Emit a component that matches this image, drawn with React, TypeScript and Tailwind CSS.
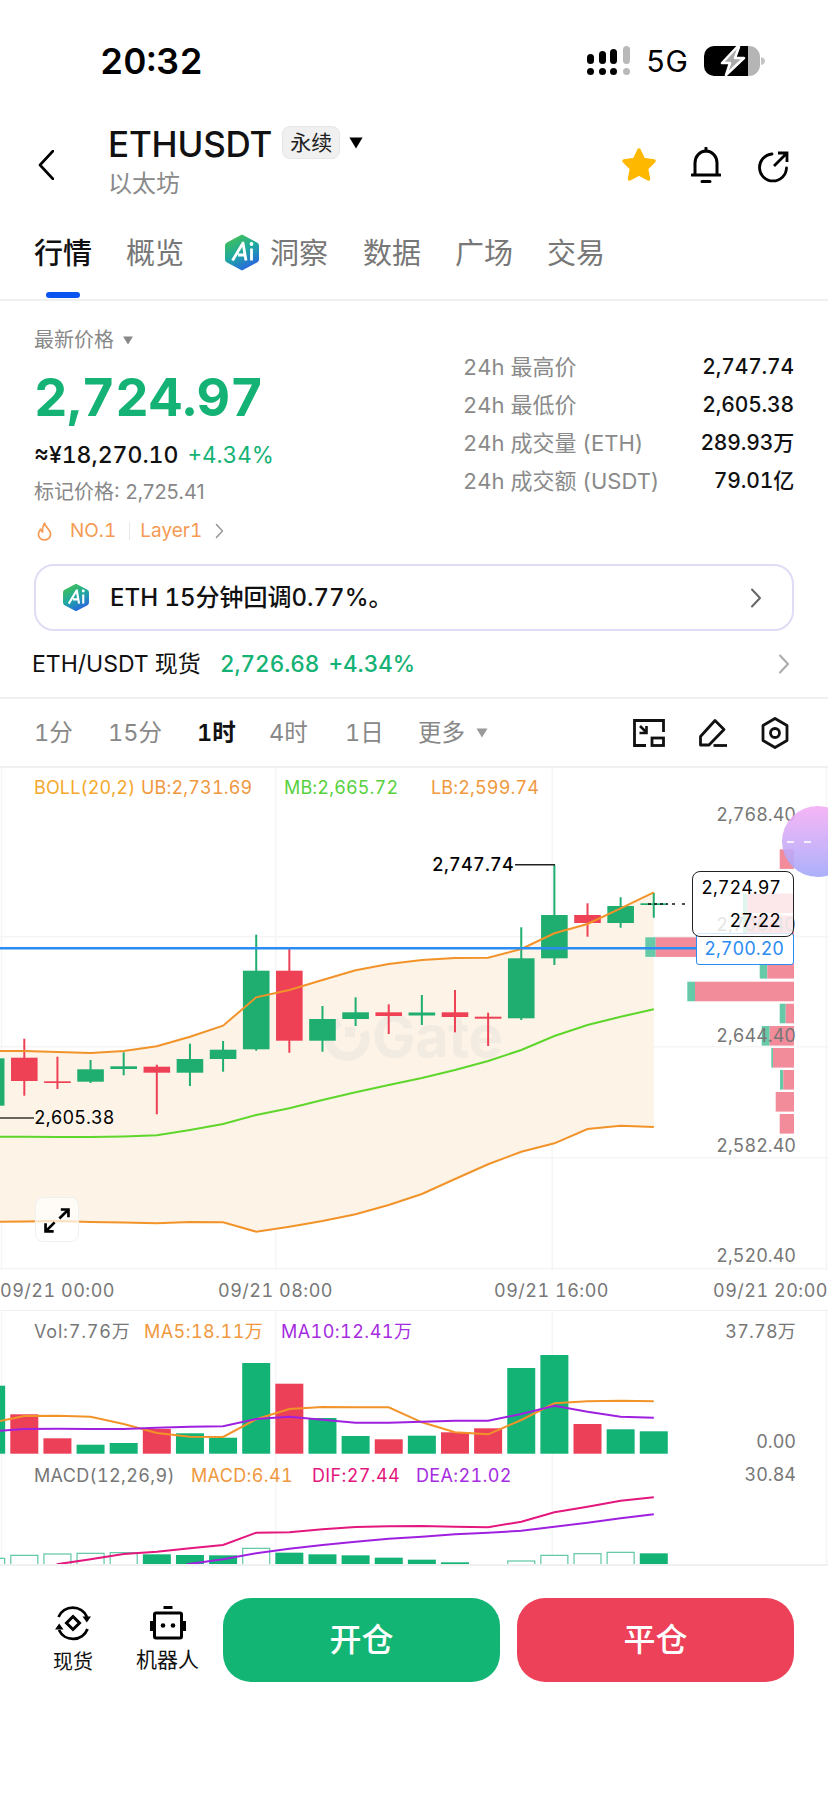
import React from "react";

const cx = (i: number) => 24.3 + 33.13 * i;
const GREEN = "#1fae70";
const RED = "#ee4156";

// i, wickTop, wickBottom, bodyTop, bodyBottom, up
const candles: [number, number, number, number, number, boolean][] = [
  [-1, 1046, 1112, 1058.3, 1105.7, true],
  [0, 1038.7, 1095.7, 1057.7, 1081, false],
  [1, 1056.7, 1089, 1081.3, 1083, false],
  [2, 1060, 1083, 1069.3, 1081.7, true],
  [3, 1052.3, 1075.3, 1066.3, 1069, true],
  [4, 1064.7, 1114.3, 1066.7, 1072.7, false],
  [5, 1043.7, 1086, 1059, 1072.7, true],
  [6, 1041, 1071.7, 1049.7, 1059, true],
  [7, 934.7, 1050.7, 970.7, 1049.3, true],
  [8, 948.3, 1052.7, 970.7, 1040.7, false],
  [9, 1006, 1051.7, 1019, 1040.7, true],
  [10, 997.3, 1026, 1012.3, 1019, true],
  [11, 1004.3, 1034, 1012.3, 1016, false],
  [12, 995, 1025, 1012.5, 1015.5, true],
  [13, 990, 1032.3, 1012.3, 1017, false],
  [14, 1012.7, 1046, 1016.7, 1018.7, false],
  [15, 927.3, 1020, 958.3, 1018.3, true],
  [16, 865, 965, 915, 958.3, true],
  [17, 903.3, 936.7, 915, 923, false],
  [18, 897.3, 927.7, 906, 923, true],
  [19, 892.7, 917.7, 903.3, 905, true],
];

const upper = [1051, 1052, 1053, 1051, 1046.3, 1036.7, 1025.7, 997.3, 990, 980, 970.3, 964, 960, 958, 957.7, 949, 933.3, 924, 908.3, 892.3];
const mid = [1136.8, 1137, 1137, 1136.5, 1135.3, 1130, 1124, 1115, 1108.3, 1100, 1092.3, 1085, 1078, 1070, 1061, 1050, 1036, 1025, 1016.7, 1009.3];
const lower = [1221.5, 1221, 1222, 1222.5, 1223.3, 1222, 1222.3, 1231.7, 1226.7, 1221, 1214.3, 1205, 1194, 1179, 1164.3, 1151.7, 1143.3, 1129, 1125.7, 1127];
const line = (ys: number[], y0: number) =>
  `0,${y0} ` + ys.map((y, i) => `${cx(i).toFixed(1)},${y}`).join(" ");

// y, greenLeft, splitX
const depth: [number, number, number][] = [
  [849.3, 779.7, 779.7],
  [893.5, 743, 747.5],
  [915.5, 743, 747.5],
  [937.3, 645.3, 655.7],
  [959, 759.7, 767.3],
  [981.7, 687.3, 695],
  [1003.7, 779.7, 785.7],
  [1026, 761.7, 769.7],
  [1048, 771.3, 773],
  [1070, 780, 783.3],
  [1092, 775.7, 775.7],
  [1114, 779.7, 779.7],
];

const volumes: [number, number, boolean][] = [
  [-1, 1385.7, true], [0, 1414.3, false], [1, 1438.3, false], [2, 1444.7, true], [3, 1443, true],
  [4, 1429, false], [5, 1433.3, true], [6, 1437.7, true], [7, 1363, true], [8, 1383.7, false],
  [9, 1418, true], [10, 1436, true], [11, 1439.3, false], [12, 1435.7, true], [13, 1432.3, false],
  [14, 1428.3, false], [15, 1368, true], [16, 1355, true], [17, 1424, false], [18, 1429.3, true], [19, 1431.3, true],
];
const ma5 = [1416, 1415.7, 1416.7, 1424, 1433, 1436.7, 1437, 1419.3, 1409, 1407, 1407.3, 1407.3, 1422.3, 1432.3, 1434.3, 1420, 1403.3, 1401.3, 1400.7, 1401.3];
const ma10 = [1429, 1428.7, 1429, 1429, 1427.7, 1426.7, 1426.3, 1419, 1416.7, 1419.7, 1422.7, 1422.7, 1421.7, 1420.7, 1420.7, 1414, 1405.7, 1411.7, 1416.7, 1417.7];

const macd: [number, number, boolean][] = [
  [-1, 865, false], [0, 856, false], [1, 852, false], [2, 850, false], [3, 848, false], [4, 853, true],
  [5, 855, true], [6, 856, true], [7, 835, false], [8, 848, true], [9, 853, true], [10, 856, true],
  [11, 863, true], [12, 869, true], [13, 877, true], [15, 873, false], [16, 856, false], [17, 851, false],
  [18, 847, false], [19, 850, true],
];
const dif = "56.7,1564.3 " + [[2, 1559.3], [3, 1554], [4, 1551.7], [5, 1548.3], [6, 1545], [7, 1532.7], [8, 1532.3], [9, 1529.3], [10, 1527], [11, 1526.3], [12, 1526], [13, 1526.7], [14, 1527.3], [15, 1521.7], [16, 1512.3], [17, 1506.7], [18, 1500.7], [19, 1497.3]].map(([i, y]) => `${cx(i).toFixed(1)},${y}`).join(" ");
const dea = "186.7,1564.3 " + [[6, 1559.3], [7, 1553.3], [8, 1548.7], [9, 1545], [10, 1541.7], [11, 1538.7], [12, 1536.7], [13, 1534.3], [14, 1532.7], [15, 1530.7], [16, 1526.7], [17, 1522.7], [18, 1518.3], [19, 1514.3]].map(([i, y]) => `${cx(i).toFixed(1)},${y}`).join(" ");

function AiLogo({ className, id }: { className: string; id: string }) {
  return (
    <svg viewBox="0 0 36 38" className={className}>
      <defs>
        <linearGradient id={id} x1="0.2" y1="0" x2="0.7" y2="1">
          <stop offset="0" stopColor="#45c24f" />
          <stop offset="0.5" stopColor="#1fa9a0" />
          <stop offset="1" stopColor="#2a5fe6" />
        </linearGradient>
      </defs>
      <path d="M18 1 L33 9 Q35 10 35 12 V26 Q35 28 33 29 L18 37 L3 29 Q1 28 1 26 V12 Q1 10 3 9 Z" fill={`url(#${id})`} />
      <path d="M8.5 27 L19 9.5 L22 27 M14 21.5 H21" fill="none" stroke="#fff" strokeWidth="2.8" strokeLinejoin="round" />
      <path d="M27.5 15 V27" stroke="#fff" strokeWidth="2.8" />
      <circle cx="27.5" cy="10.5" r="1.9" fill="#fff" />
    </svg>
  );
}

function Chevron({ className, stroke }: { className: string; stroke: string }) {
  return (
    <svg viewBox="0 0 12 20" className={className}>
      <path d="M2 1.5 L10 10 L2 18.5" fill="none" stroke={stroke} strokeWidth="2" strokeLinecap="round" strokeLinejoin="round" />
    </svg>
  );
}

function Triangle({ className, fill }: { className: string; fill: string }) {
  return (
    <svg viewBox="0 0 12 10" className={className}>
      <path d="M0.5 0.5 H11.5 L6 9.5 Z" fill={fill} />
    </svg>
  );
}

function StatusBar() {
  return (
    <div className="flex h-[122px] items-center">
      <span className="ml-[100px] w-[487px] text-[36px] font-semibold leading-none text-black">20:32</span>
      <svg viewBox="0 0 46 30" className="h-[30px] w-[46px]">
        <rect x="0" y="8" width="7" height="10" rx="3.5" fill="#000" />
        <rect x="12" y="5" width="7" height="13" rx="3.5" fill="#000" />
        <rect x="23" y="3" width="7" height="15" rx="3.5" fill="#000" />
        <rect x="36" y="0" width="7" height="18" rx="3.5" fill="#b9b9b9" />
        <circle cx="3.5" cy="25.5" r="3.5" fill="#000" />
        <circle cx="15.5" cy="25.5" r="3.5" fill="#000" />
        <circle cx="26.5" cy="25.5" r="3.5" fill="#000" />
        <circle cx="39.5" cy="25.5" r="3.5" fill="#b9b9b9" />
      </svg>
      <span className="ml-[13px] w-[58px] text-[30px] leading-none text-black">5G</span>
      <svg viewBox="0 0 62 30" className="h-[30px] w-[62px]">
        <path d="M10 0 H44 V30 H10 A10 10 0 0 1 0 20 V10 A10 10 0 0 1 10 0 Z" fill="#000" />
        <path d="M44 0 H45 A11 11 0 0 1 56 11 V19 A11 11 0 0 1 45 30 H44 Z" fill="#b5b5b5" />
        <path d="M57 11 Q61 12 61 15 Q61 18 57 19 Z" fill="#c4c4c4" />
        <path d="M33 1 L18 17 H26 L22 29 L40 12 H31 L35 1 Z" fill="#a9a9a9" stroke="#fff" strokeWidth="2.5" strokeLinejoin="round" />
      </svg>
    </div>
  );
}

function Header() {
  return (
    <div className="flex h-[88px]">
      <svg viewBox="0 0 16 30" className="ml-[38px] mt-[28px] h-[30px] w-[16px]">
        <path d="M15 1 L2 15 L15 29" fill="none" stroke="#000" strokeWidth="2.6" strokeLinecap="round" strokeLinejoin="round" />
      </svg>
      <div className="ml-[54px] w-[513px]">
        <div className="flex h-[40px] items-center">
          <span className="mt-[4px] text-[35px] font-medium leading-none tracking-[-0.2px] text-[#111]">ETHUSDT</span>
          <span className="ml-[10px] mt-[1px] flex h-[33px] w-[58px] items-center justify-center rounded-lg border border-[#e6e6e6] bg-[#f0f0f0] text-[21px] leading-none text-[#222]">永续</span>
          <Triangle className="ml-[8px] mt-[1px] h-[12px] w-[16px]" fill="#000" />
        </div>
        <div className="mt-[10px] text-[24px] leading-[24px] text-[#8a8a8a]">以太坊</div>
      </div>
      <svg viewBox="0 0 36 35" className="mt-[25px] h-[35px] w-[36px]">
        <path d="M18 3 L22.5 12.5 L33 14 L25.5 21.5 L27.5 32 L18 27 L8.5 32 L10.5 21.5 L3 14 L13.5 12.5 Z" fill="#ffb800" stroke="#ffb800" strokeWidth="3.5" strokeLinejoin="round" />
      </svg>
      <svg viewBox="0 0 30 36" className="ml-[34px] mt-[25px] h-[36px] w-[30px]">
        <path d="M4 28 V16 A11 12 0 0 1 26 16 V28" fill="none" stroke="#000" strokeWidth="3" />
        <path d="M1 28 H29 M15 1 V4 M11 34.5 H19" fill="none" stroke="#000" strokeWidth="3" strokeLinecap="round" />
      </svg>
      <svg viewBox="0 0 32 32" className="ml-[36px] mt-[29px] h-[32px] w-[32px]">
        <path d="M15 3 A13.5 13.5 0 1 0 29.5 17" fill="none" stroke="#000" strokeWidth="2.8" strokeLinecap="round" />
        <path d="M17 15 L30 2 M21 2 H30 V11" fill="none" stroke="#000" strokeWidth="2.8" />
      </svg>
    </div>
  );
}

function Tabs() {
  return (
    <div className="relative flex h-[91px] items-start border-b-2 border-[#f0f0f0] pl-[34px] pt-[29px] text-[29px] leading-[30px] text-[#777]">
      <span className="font-medium text-[#111]">行情</span>
      <span className="ml-[34px]">概览</span>
      <AiLogo id="aiTab" className="ml-[40px] -mt-[6px] h-[39px] w-[36px]" />
      <span className="ml-[10px]">洞察</span>
      <span className="ml-[35px]">数据</span>
      <span className="ml-[34px]">广场</span>
      <span className="ml-[34px]">交易</span>
      <span className="absolute bottom-[1px] left-[46px] h-[6px] w-[34px] rounded-full bg-[#0a55f0]" />
    </div>
  );
}

function Stat({ label, value }: { label: string; value: string }) {
  return (
    <div className="flex h-[38px] items-center justify-between">
      <span className="text-[22px] text-[#8a8a8a]">{label}</span>
      <span className="text-[21px] font-medium tracking-[-0.15px] text-[#111]">{value}</span>
    </div>
  );
}

function Info() {
  return (
    <div className="flex h-[263px] justify-between pl-[34px] pr-[34px]">
      <div>
        <div className="mt-[25px] flex h-[28px] items-center text-[20px] text-[#888]">
          最新价格
          <Triangle className="ml-[8px] h-[9px] w-[12px]" fill="#888" />
        </div>
        <div className="mt-[14px] h-[60px] text-[52px] font-bold leading-[60px] text-[#14b274]">2,724.97</div>
        <div className="mt-[12px] flex h-[30px] items-center">
          <span className="text-[23px] font-medium text-[#111]">≈¥18,270.10</span>
          <span className="ml-[9px] text-[22.5px] text-[#14b274]">+4.34%</span>
        </div>
        <div className="mt-[8px] h-[28px] text-[20px] leading-[28px] text-[#888] normal-nums">标记价格: 2,725.41</div>
        <div className="mt-[12px] flex h-[26px] items-center text-[19px] text-[#f59b55]">
          <svg viewBox="0 0 16 20" className="ml-[3px] h-[19px] w-[15px]">
            <path d="M8 1 C8.5 5 14.5 8 14.5 13 A6.5 6 0 0 1 1.5 13 C1.5 10.5 3 8.5 4 7.5 C4.5 9 5 10 6 10.5 C5.5 7 6.5 3.5 8 1 Z" fill="none" stroke="#f59b55" strokeWidth="1.8" strokeLinejoin="round" />
          </svg>
          <span className="ml-[18px]">NO.1</span>
          <span className="ml-[13px] h-[18px] w-px bg-[#e8e8e8]" />
          <span className="ml-[10px]">Layer1</span>
          <Chevron className="ml-[13px] h-[18px] w-[9px]" stroke="#999" />
        </div>
      </div>
      <div className="mt-[47px] w-[331px]">
        <Stat label="24h 最高价" value="2,747.74" />
        <Stat label="24h 最低价" value="2,605.38" />
        <Stat label="24h 成交量 (ETH)" value="289.93万" />
        <Stat label="24h 成交额 (USDT)" value="79.01亿" />
      </div>
    </div>
  );
}

function AiCard() {
  return (
    <div className="mx-[34px] flex h-[67px] items-center rounded-[20px] border-2 border-[#e0dcf5] pl-[26px] pr-[30px]">
      <AiLogo id="aiCard" className="h-[29px] w-[28px]" />
      <span className="ml-[20px] flex-1 text-[24px] font-medium text-[#111]">ETH 15分钟回调0.77%。</span>
      <Chevron className="h-[20px] w-[12px]" stroke="#666" />
    </div>
  );
}

function SpotRow() {
  return (
    <div className="flex h-[68px] items-center border-b-2 border-[#f0f0f0] pl-[32px] pr-[38px] text-[23px]">
      <span className="text-[#111]">ETH/USDT 现货</span>
      <span className="ml-[19px] text-[22.5px] font-medium text-[#14b274]">2,726.68</span>
      <span className="ml-[9px] text-[22.5px] font-medium text-[#14b274]">+4.34%</span>
      <span className="flex-1" />
      <Chevron className="h-[20px] w-[12px]" stroke="#aaa" />
    </div>
  );
}

function Timeframes() {
  return (
    <div className="flex h-[69px] items-center border-b-2 border-[#f0f0f0] pl-[34px] text-[23.5px] text-[#888]">
      <span className="w-[74px]">1分</span>
      <span className="w-[89px]">15分</span>
      <span className="w-[72px] font-semibold text-[#111]">1时</span>
      <span className="w-[76px]">4时</span>
      <span className="w-[73px]">1日</span>
      <span className="w-[58px]">更多</span>
      <Triangle className="h-[10px] w-[12px]" fill="#999" />
      <svg viewBox="0 0 32 28" className="ml-[145px] h-[28px] w-[32px]">
        <path d="M13 26.5 H1.5 V1.5 H30.5 V13" fill="none" stroke="#111" strokeWidth="2.8" />
        <rect x="19" y="19" width="11.5" height="7.5" fill="none" stroke="#111" strokeWidth="2.8" />
        <path d="M7 7 L13 13 M13.5 7 V14 H6.5" fill="none" stroke="#111" strokeWidth="2.6" />
      </svg>
      <svg viewBox="0 0 30 30" className="ml-[33px] h-[30px] w-[30px]">
        <path d="M2.5 27 V18.5 L17 2.5 L26 11.5 L11 27 Z" fill="none" stroke="#111" strokeWidth="2.8" strokeLinejoin="round" />
        <path d="M15.5 27.5 H29" fill="none" stroke="#111" strokeWidth="2.8" />
      </svg>
      <svg viewBox="0 0 28 32" className="ml-[33px] h-[32px] w-[28px]">
        <path d="M14 1.5 L26 8.5 V23.5 L14 30.5 L2 23.5 V8.5 Z" fill="none" stroke="#111" strokeWidth="2.8" strokeLinejoin="round" />
        <circle cx="14" cy="16" r="4.5" fill="none" stroke="#111" strokeWidth="2.8" />
      </svg>
    </div>
  );
}

function MainChart() {
  return (
    <div className="relative h-[502px] text-[18px] leading-[24px]">
      <svg viewBox="0 768 828 502" className="absolute inset-0 h-[502px] w-[828px]">
        <path d="M0 936.7 H828 M0 1046.7 H828 M0 1157.7 H828 M1.5 768 V1270 M275.7 768 V1270 M552.3 768 V1270 M826.5 768 V1270 M0 1268.5 H828" stroke="#f5f5f5" strokeWidth="1.5" fill="none" />
        <polygon
          fill="#fdf3e7"
          points={
            line(upper, 1051) +
            " " +
            lower.map((y, i) => `${cx(i).toFixed(1)},${y}`).reverse().join(" ") +
            " 0,1221.7"
          }
        />
      </svg>
      <span className="absolute left-[372px] top-[236px] text-[58px] font-bold leading-[64px] tracking-[-0.5px] text-[#f2ebe2]">Gate</span>
      <svg viewBox="0 768 828 502" className="absolute inset-0 h-[502px] w-[828px]">
        <path d="M340 1022 A18 18 0 1 0 364 1032" fill="none" stroke="#f2ebe2" strokeWidth="9" />
        <rect x="345" y="1027" width="10" height="10" fill="#f2ebe2" />
        {candles.map(([i, wt, wb, bt, bb, up]) => (
          <g key={i} fill={up ? GREEN : RED} stroke="none">
            <rect x={cx(i) - 1} y={wt} width="2" height={wb - wt} />
            <rect x={cx(i) - 13.3} y={bt} width="26.6" height={Math.max(bb - bt, 1.6)} />
          </g>
        ))}
        <polyline points={line(upper, 1051)} fill="none" stroke="#f2932a" strokeWidth="2" />
        <polyline points={line(mid, 1136.8)} fill="none" stroke="#5ed62c" strokeWidth="2" />
        <polyline points={line(lower, 1221.7)} fill="none" stroke="#f2932a" strokeWidth="2" />
        <path d="M515 864.7 H555" stroke="#222" strokeWidth="1.5" />
        <path d="M0 1118 H34" stroke="#333" strokeWidth="1.5" />
        <path d="M648 904 H668 M672 904 H675 M682 904 H685" stroke="#111" strokeWidth="1.5" strokeDasharray="3 3" />
        {depth.map(([y, gl, rl]) => (
          <g key={y}>
            {rl > gl && <rect x={gl} y={y} width={rl - gl} height="19.6" fill="#66caa8" />}
            <rect x={rl} y={y} width={794 - rl} height="19.6" fill="#f28b9a" />
          </g>
        ))}
        <path d="M0 948.3 H700" stroke="#2b8cf2" strokeWidth="2.4" />
      </svg>
      <div className="relative flex h-[40px] items-center pl-[34px] text-[18px] tracking-[0.15px]">
        <span className="w-[107px] whitespace-nowrap text-[#f5a82d]">BOLL(20,2)</span>
        <span className="w-[143px] whitespace-nowrap text-[#f0983e]">UB:2,731.69</span>
        <span className="w-[147px] whitespace-nowrap text-[#57d13d]">MB:2,665.72</span>
        <span className="whitespace-nowrap text-[#f0983e]">LB:2,599.74</span>
      </div>
      <span className="absolute right-[32px] top-[35px] text-[#777]">2,768.40</span>
      <span className="absolute right-[32px] top-[145px] text-[#777]">2,706.40</span>
      <span className="absolute right-[32px] top-[256px] text-[#777]">2,644.40</span>
      <span className="absolute right-[32px] top-[366px] text-[#777]">2,582.40</span>
      <span className="absolute right-[32px] top-[476px] text-[#777]">2,520.40</span>
      <span className="absolute left-[432px] top-[85px] font-medium tracking-[0.3px] text-black">2,747.74</span>
      <span className="absolute left-[34px] top-[338px] tracking-[0.1px] text-black">2,605.38</span>
      <div className="absolute left-[696px] top-[165px] flex h-[32px] w-[98px] items-center justify-end rounded-[3px] border border-[#2b8cf2] bg-white pr-[9px] text-[#2b8cf2]">2,700.20</div>
      <div className="absolute left-[692px] top-[103px] flex h-[66px] w-[102px] flex-col items-end justify-center rounded-lg border border-[#222] bg-white/80 pr-[12px] leading-[33px] text-black">
        <span>2,724.97</span>
        <span>27:22</span>
      </div>
      <div className="absolute left-[35px] top-[429px] flex h-[45px] w-[44px] items-center justify-center rounded-lg border border-[#f0f0f0] bg-white/70">
        <svg viewBox="0 0 44 44" className="h-[44px] w-[44px]">
          <path d="M24.5 20.5 L33.5 11.5 M26 11 H34 V19 M19.5 24.5 L10.5 33.5 M10 25.5 V34 H18.5" fill="none" stroke="#000" strokeWidth="2.8" />
        </svg>
      </div>
      <div className="absolute left-[782px] top-[38px] flex h-[71px] w-[71px] items-center rounded-full bg-gradient-to-b from-[#f5aef6] to-[#a3a8fa] pl-[5px] opacity-90">
        <span className="h-[2px] w-[7px] bg-white/80" />
        <span className="ml-[10px] h-[2px] w-[7px] bg-white/80" />
      </div>
    </div>
  );
}

function XAxis() {
  return (
    <div className="flex h-[41px] items-center border-b border-[#f0f0f0] text-[18px] tracking-[0.5px] text-[#777]">
      <span className="w-[218px] whitespace-nowrap">09/21 00:00</span>
      <span className="w-[276px] whitespace-nowrap">09/21 08:00</span>
      <span className="w-[219px] whitespace-nowrap">09/21 16:00</span>
      <span className="w-[115px] whitespace-nowrap">09/21 20:00</span>
    </div>
  );
}

function VolumeChart() {
  return (
    <div className="relative h-[144px] text-[18px] leading-[24px]">
      <svg viewBox="0 1311 828 144" className="absolute inset-0 h-[144px] w-[828px]">
        <path d="M275.7 1311 V1455 M552.3 1311 V1455 M1.5 1311 V1455 M826.5 1311 V1455" stroke="#f5f5f5" strokeWidth="1.5" />
        {volumes.map(([i, top, up]) => (
          <rect key={i} x={cx(i) - 14} y={top} width="28" height={1453.7 - top} fill={up ? "#12b375" : "#ec4058"} />
        ))}
        <polyline points={line(ma5, 1421)} fill="none" stroke="#f2932a" strokeWidth="2" />
        <polyline points={line(ma10, 1430.7)} fill="none" stroke="#a020e0" strokeWidth="2" />
      </svg>
      <div className="relative flex h-[41px] items-center pl-[34px] tracking-[0.45px]">
        <span className="w-[110px] whitespace-nowrap tracking-[0.8px] text-[#777]">Vol:7.76万</span>
        <span className="w-[137px] whitespace-nowrap text-[#f0983e]">MA5:18.11万</span>
        <span className="whitespace-nowrap text-[#a62ce0]">MA10:12.41万</span>
      </div>
      <span className="absolute right-[32px] top-[9px] tracking-[0.2px] text-[#777]">37.78万</span>
      <span className="absolute right-[32px] top-[119px] text-[#777]">0.00</span>
    </div>
  );
}

function MacdChart() {
  return (
    <div className="relative h-[109px] text-[18px] leading-[24px]">
      <svg viewBox="0 1455 828 109" className="absolute inset-0 h-[109px] w-[828px]">
        <path d="M275.7 1455 V1564 M552.3 1455 V1564 M1.5 1455 V1564 M826.5 1455 V1564" stroke="#f5f5f5" strokeWidth="1.5" />
        {macd.map(([i, z, solid]) => {
          const top = 1270 + z / 3;
          return solid ? (
            <rect key={i} x={cx(i) - 14} y={top} width="28" height={1564 - top} fill="#12b375" />
          ) : (
            <rect key={i} x={cx(i) - 13.5} y={top} width="27" height={1570 - top} fill="#fff" stroke="#5ec7a3" strokeWidth="1.2" />
          );
        })}
        <polyline points={dif} fill="none" stroke="#e3177e" strokeWidth="2" />
        <polyline points={dea} fill="none" stroke="#a020e0" strokeWidth="2" />
      </svg>
      <div className="relative flex h-[41px] items-center pl-[34px] tracking-[0.35px]">
        <span className="w-[157px] whitespace-nowrap text-[#777]">MACD(12,26,9)</span>
        <span className="w-[121px] whitespace-nowrap text-[#f0983e]">MACD:6.41</span>
        <span className="w-[104px] whitespace-nowrap text-[#e3177e]">DIF:27.44</span>
        <span className="whitespace-nowrap text-[#a62ce0]">DEA:21.02</span>
      </div>
      <span className="absolute right-[32px] top-[8px] text-[#777]">30.84</span>
    </div>
  );
}

function BottomBar() {
  return (
    <div className="flex border-t-2 border-[#f0f0f0] pl-[53px] pt-[32px]">
      <div className="flex w-[40px] flex-col items-center">
        <svg viewBox="0 0 36 36" className="mt-[7px] h-[36px] w-[36px]">
          <path d="M3.5 12 A15.5 15.5 0 0 1 32 12" fill="none" stroke="#000" strokeWidth="2.8" />
          <path d="M32.5 24 A15.5 15.5 0 0 1 4 25" fill="none" stroke="#000" strokeWidth="2.8" />
          <path d="M27.5 11.5 H36 L31.8 17.5 Z M0 24.5 H8.5 L4.2 18.5 Z" fill="#000" />
          <path d="M18 11.5 L24.5 18 L18 24.5 L11.5 18 Z" fill="none" stroke="#000" strokeWidth="3" />
        </svg>
        <span className="mt-[8px] whitespace-nowrap text-[20px] leading-[26px] text-[#111]">现货</span>
      </div>
      <div className="ml-[43px] flex w-[63px] flex-col items-center">
        <svg viewBox="0 0 36 34" className="mt-[8px] h-[34px] w-[36px]">
          <path d="M13.5 1.5 H22.5" stroke="#000" strokeWidth="3" />
          <rect x="4.5" y="7" width="27" height="25" rx="1.5" fill="none" stroke="#000" strokeWidth="3" />
          <path d="M1.5 15 V25 M34.5 15 V25" stroke="#000" strokeWidth="3" />
          <circle cx="13" cy="19.5" r="2.3" fill="#000" />
          <circle cx="23" cy="19.5" r="2.3" fill="#000" />
        </svg>
        <span className="mt-[7px] whitespace-nowrap text-[21px] leading-[26px] text-[#111]">机器人</span>
      </div>
      <button className="ml-[24px] flex h-[84px] w-[277px] items-center justify-center rounded-[28px] bg-[#12b574] text-[32px] font-medium text-white">开仓</button>
      <button className="ml-[17px] flex h-[84px] w-[277px] items-center justify-center rounded-[28px] bg-[#ec4159] text-[32px] font-medium text-white">平仓</button>
    </div>
  );
}

export default function App() {
  return (
    <div className="flex h-[1796px] w-[828px] flex-col overflow-hidden bg-white tabular-nums [font-family:Inter,'Noto_Sans_CJK_SC',sans-serif]">
      <StatusBar />
      <Header />
      <Tabs />
      <Info />
      <AiCard />
      <SpotRow />
      <Timeframes />
      <MainChart />
      <XAxis />
      <VolumeChart />
      <MacdChart />
      <BottomBar />
    </div>
  );
}
